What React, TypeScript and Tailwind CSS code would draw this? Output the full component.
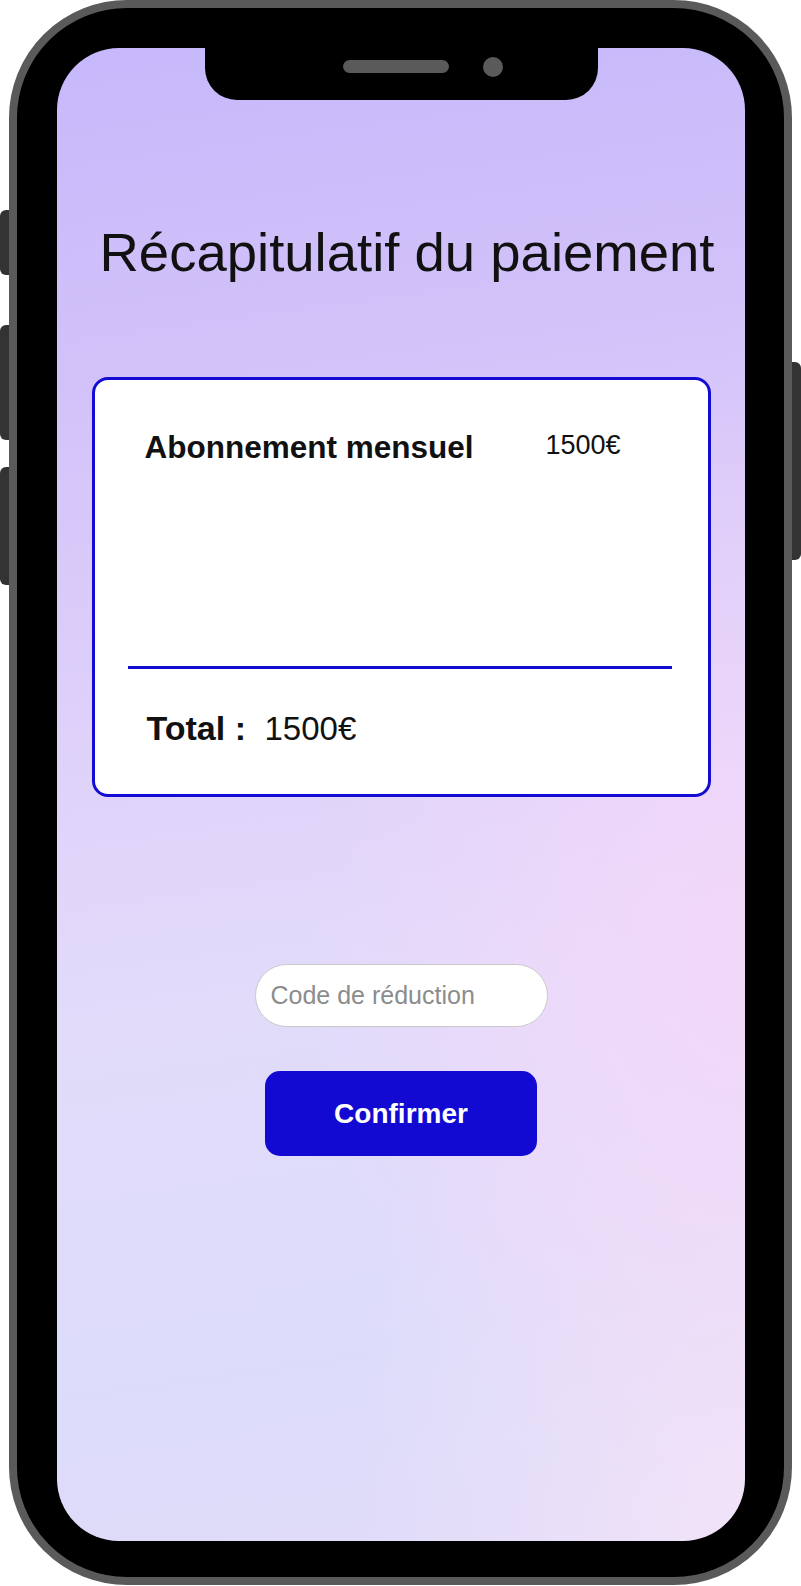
export default function App() {
  return (
    <div className="relative h-[1586px] w-[801px] overflow-hidden bg-white font-['Liberation_Sans',Arial,sans-serif] text-[#111111]">
      {/* boutons latéraux */}
      <div className="absolute left-0 top-[210px] h-[65px] w-[12px] rounded-l-[6px] bg-[#333333]" />
      <div className="absolute left-0 top-[325px] h-[115px] w-[12px] rounded-l-[6px] bg-[#333333]" />
      <div className="absolute left-0 top-[467px] h-[118px] w-[12px] rounded-l-[6px] bg-[#333333]" />
      <div className="absolute right-0 top-[362px] h-[198px] w-[12px] rounded-r-[6px] bg-[#333333]" />

      {/* téléphone */}
      <div className="relative ml-[9px] h-[1585px] w-[783px] rounded-[118px] border-[8px] border-[#5a5a5a] bg-black pb-[36px] pl-[40px] pr-[39px] pt-[40px]">
        <div className="relative h-full overflow-hidden rounded-[62px] bg-[radial-gradient(ellipse_at_100%_60%,rgba(244,214,249,0.85),transparent_45%),radial-gradient(ellipse_at_100%_100%,rgba(243,228,248,0.9),transparent_40%),linear-gradient(172deg,#c6b8fb_0%,#d3c2f9_22%,#dfd2fa_45%,#e2dbfa_62%,#dcdcfa_85%,#e0dbf9_100%)]">
          {/* encoche */}
          <div className="absolute left-[148px] top-0 h-[52px] w-[393px] rounded-b-[32px] bg-black">
            <div className="absolute left-[138px] top-[12px] h-[13px] w-[106px] rounded-full bg-[#5a5a5a]" />
            <div className="absolute left-[278px] top-[9px] h-[20px] w-[20px] rounded-full bg-[#5a5a5a]" />
          </div>

          <div className="flex flex-col items-center pt-[174px]">
            <h1 className="pl-[12px] text-[54.5px] font-normal leading-[62px]">Récapitulatif du paiement</h1>

            {/* récapitulatif */}
            <div className="mt-[93px] w-[619px] rounded-[16px] border-[3px] border-[#140cd2] bg-white pb-[47px] pt-[47px]">
              <div className="flex items-start pl-[50px]">
                <span className="mt-[2px] w-[401px] text-[31.5px] font-bold leading-[36px]">Abonnement mensuel</span>
                <span className="text-[27px] leading-[36px]">1500€</span>
              </div>
              <div className="ml-[33px] mr-[36px] mt-[201px] h-[3px] bg-[#140cd2]" />
              <div className="mt-[41px] flex items-baseline pl-[52px]">
                <span className="w-[118px] text-[34px] font-bold leading-[36px]">Total :</span>
                <span className="text-[33px] leading-[36px]">1500€</span>
              </div>
            </div>

            <input
              type="text"
              placeholder="Code de réduction"
              className="mt-[167px] h-[63px] w-[293px] rounded-full border border-[#c9c9c9] bg-white pl-[15px] text-[25px] text-[#333] outline-none placeholder:text-[#8c8c8c]"
            />

            <button className="mt-[44px] h-[85px] w-[272px] rounded-[15px] bg-[#1209d3] text-[28px] font-bold text-white">
              Confirmer
            </button>
          </div>
        </div>
      </div>
    </div>
  )
}
